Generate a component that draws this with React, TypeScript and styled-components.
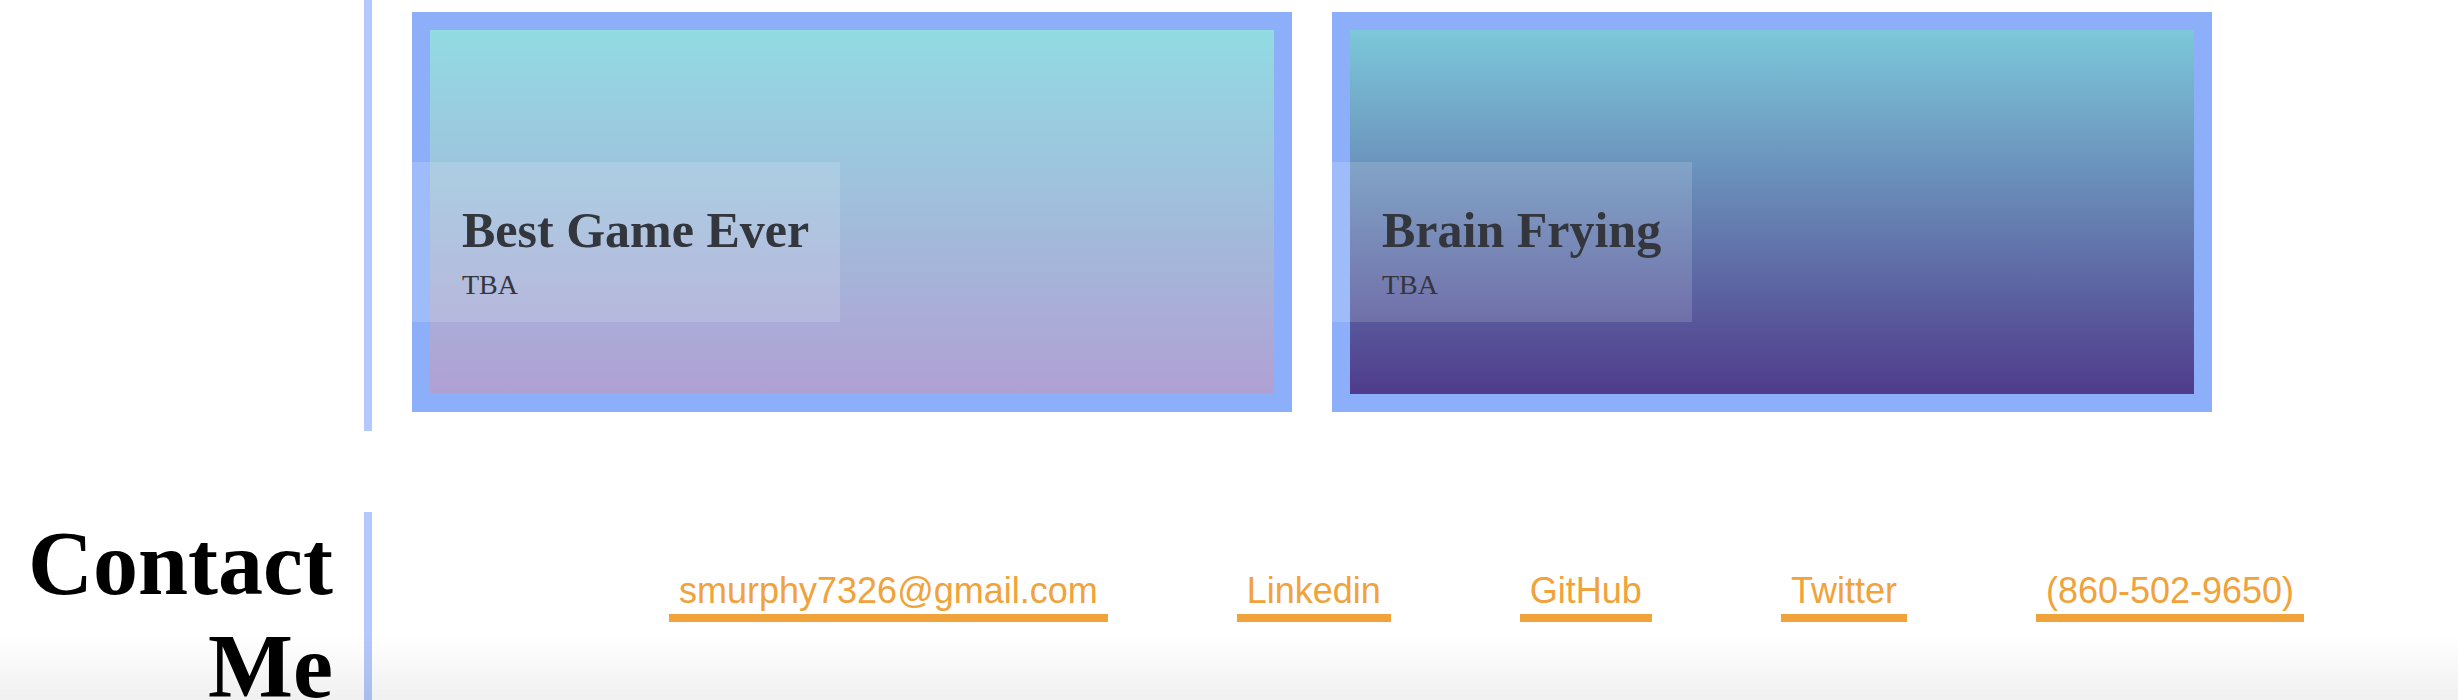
import React from "react";
import styled, { createGlobalStyle } from "styled-components";

const GlobalStyle = createGlobalStyle`
  html, body {
    margin: 0;
    padding: 0;
    background: #ffffff;
    font-family: "Liberation Serif", "Times New Roman", serif;
  }
  * { box-sizing: border-box; }
`;

const Page = styled.div`
  display: flex;
  flex-direction: column;
  gap: 81px;
`;

const Section = styled.section`
  display: grid;
  grid-template-columns: 364px 1fr;
`;

const SideColumn = styled.div`
  padding-right: 31px;
  text-align: right;
`;

const SectionHeading = styled.h2`
  margin: 0;
  font-family: "Liberation Serif", "Times New Roman", serif;
  font-weight: 700;
  font-size: 90px;
  line-height: normal;
  color: #000000;
`;

const Content = styled.div`
  border-left: 8px solid #b4c9fb;
`;

const CardRow = styled.div`
  display: flex;
  gap: 40px;
  padding: 12px 0 19px 40px;
`;

const Card = styled.div`
  position: relative;
  width: 880px;
  height: 400px;
  padding: 18px;
  background: #8daff9;
`;

const CardImage = styled.div<{ $from: string; $to: string }>`
  width: 100%;
  height: 100%;
  background: linear-gradient(180deg, ${(p) => p.$from} 0%, ${(p) => p.$to} 100%);
`;

const CardOverlay = styled.div`
  position: absolute;
  left: 0;
  top: 150px;
  height: 160px;
  padding: 39px 31px 0 50px;
  background: rgba(255, 255, 255, 0.15);
  display: flex;
  flex-direction: column;
  gap: 10px;
`;

const CardTitle = styled.h3`
  margin: 0;
  font-family: "Liberation Serif", "Times New Roman", serif;
  font-weight: 700;
  font-size: 50px;
  line-height: normal;
  color: #33363d;
  white-space: nowrap;
`;

const CardStatus = styled.p`
  margin: 0;
  font-family: "Liberation Serif", "Times New Roman", serif;
  font-size: 28px;
  line-height: normal;
  color: #33363d;
`;

const LinkRow = styled.div`
  display: flex;
  align-items: flex-start;
  gap: 129px;
  padding: 58px 0 0 297px;
`;

const ContactLink = styled.a`
  font-family: "Liberation Sans", Arial, sans-serif;
  font-size: 36px;
  line-height: normal;
  color: #f0a23b;
  text-decoration: none;
  padding: 0 10px 2px;
  border-bottom: 8px solid #f0a23b;
  white-space: nowrap;
`;

const BottomFade = styled.div`
  position: fixed;
  left: 0;
  right: 0;
  bottom: 0;
  height: 64px;
  pointer-events: none;
  background: linear-gradient(180deg, rgba(0, 0, 0, 0) 0%, rgba(0, 0, 0, 0.06) 100%);
`;

const projects = [
  { title: "Best Game Ever", status: "TBA", from: "#92dbe3", to: "#b0a0d4" },
  { title: "Brain Frying", status: "TBA", from: "#7cc8da", to: "#4f3b8b" },
];

const links = [
  { label: "smurphy7326@gmail.com", href: "mailto:smurphy7326@gmail.com" },
  { label: "Linkedin", href: "#" },
  { label: "GitHub", href: "#" },
  { label: "Twitter", href: "#" },
  { label: "(860-502-9650)", href: "tel:8605029650" },
];

export default function App() {
  return (
    <>
      <GlobalStyle />
      <Page>
        <Section>
          <SideColumn />
          <Content>
            <CardRow>
              {projects.map((p) => (
                <Card key={p.title}>
                  <CardImage $from={p.from} $to={p.to} />
                  <CardOverlay>
                    <CardTitle>{p.title}</CardTitle>
                    <CardStatus>{p.status}</CardStatus>
                  </CardOverlay>
                </Card>
              ))}
            </CardRow>
          </Content>
        </Section>
        <Section>
          <SideColumn>
            <SectionHeading>Contact Me</SectionHeading>
          </SideColumn>
          <Content>
            <LinkRow>
              {links.map((l) => (
                <ContactLink key={l.label} href={l.href}>
                  {l.label}
                </ContactLink>
              ))}
            </LinkRow>
          </Content>
        </Section>
      </Page>
      <BottomFade />
    </>
  );
}
